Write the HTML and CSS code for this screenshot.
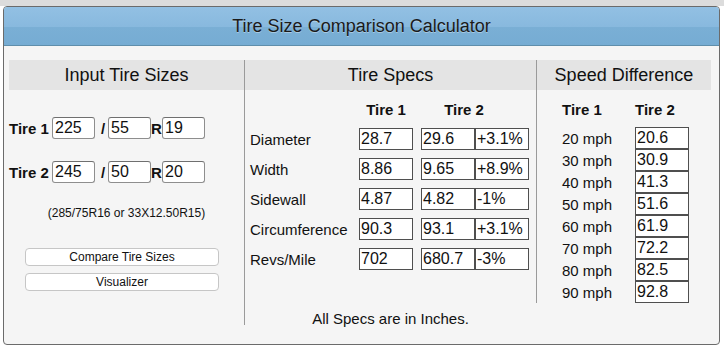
FILE: index.html
```html
<!DOCTYPE html>
<html>
<head>
<meta charset="utf-8">
<title>Tire Size Comparison Calculator</title>
<link rel="stylesheet" href="styles.css">
</head>
<body>
<div class="panel">
  <div class="title">Tire Size Comparison Calculator</div>
  <div class="cols">
    <div class="col col-input">
      <div class="band">Input Tire Sizes</div>
      <div class="size-row row-one">
        <span class="lbl">Tire 1</span>
        <span class="field">225</span>
        <span class="slash">/</span>
        <span class="field">55</span>
        <span class="rim">R</span>
        <span class="field">19</span>
      </div>
      <div class="size-row row-two">
        <span class="lbl">Tire 2</span>
        <span class="field">245</span>
        <span class="slash">/</span>
        <span class="field">50</span>
        <span class="rim">R</span>
        <span class="field">20</span>
      </div>
      <div class="note">(285/75R16 or 33X12.50R15)</div>
      <div class="btn btn-first">Compare Tire Sizes</div>
      <div class="btn btn-second">Visualizer</div>
    </div>
    <div class="col col-specs">
      <div class="band">Tire Specs</div>
      <div class="spec-head"><span class="sh-lbl"></span><span class="sh-one">Tire 1</span><span class="sh-two">Tire 2</span></div>
      <div class="spec-row"><span class="spec-lbl">Diameter</span><span class="box">28.7</span><span class="box box-two">29.6</span><span class="box">+3.1%</span></div>
      <div class="spec-row"><span class="spec-lbl">Width</span><span class="box">8.86</span><span class="box box-two">9.65</span><span class="box">+8.9%</span></div>
      <div class="spec-row"><span class="spec-lbl">Sidewall</span><span class="box">4.87</span><span class="box box-two">4.82</span><span class="box">-1%</span></div>
      <div class="spec-row"><span class="spec-lbl">Circumference</span><span class="box">90.3</span><span class="box box-two">93.1</span><span class="box">+3.1%</span></div>
      <div class="spec-row"><span class="spec-lbl">Revs/Mile</span><span class="box">702</span><span class="box box-two">680.7</span><span class="box">-3%</span></div>
      <div class="units">All Specs are in Inches.</div>
    </div>
    <div class="col col-speed">
      <div class="band">Speed Difference</div>
      <div class="speed-head"><span class="sp-one">Tire 1</span><span class="sp-two">Tire 2</span></div>
      <div class="speed-row"><span class="speed-lbl">20 mph</span><span class="box">20.6</span></div>
      <div class="speed-row"><span class="speed-lbl">30 mph</span><span class="box">30.9</span></div>
      <div class="speed-row"><span class="speed-lbl">40 mph</span><span class="box">41.3</span></div>
      <div class="speed-row"><span class="speed-lbl">50 mph</span><span class="box">51.6</span></div>
      <div class="speed-row"><span class="speed-lbl">60 mph</span><span class="box">61.9</span></div>
      <div class="speed-row"><span class="speed-lbl">70 mph</span><span class="box">72.2</span></div>
      <div class="speed-row"><span class="speed-lbl">80 mph</span><span class="box">82.5</span></div>
      <div class="speed-row"><span class="speed-lbl">90 mph</span><span class="box">92.8</span></div>
    </div>
  </div>
</div>
</body>
</html>
```

FILE: styles.css
```css
* { box-sizing: border-box; }

html, body {
  margin: 0;
  padding: 0;
}

body {
  background: linear-gradient(#dcdcdc 0, #dcdcdc 6px, #ffffff 6px);
  font-family: "Liberation Sans", Arial, Helvetica, sans-serif;
  color: #111;
  padding-top: 6px;
  padding-left: 3px;
  height: 355px;
}

.panel {
  width: 717px;
  height: 339px;
  border: 1px solid #6b6b6b;
  border-radius: 4px;
  background: #f5f5f5;
  overflow: hidden;
}

.title {
  height: 39px;
  line-height: 38px;
  border-bottom: 1px solid #5f8eab;
  background: linear-gradient(#92c0e3 0, #88b9de 52%, #7aafd5 52%, #76acd3 100%);
  text-align: center;
  font-size: 18px;
  color: #1a1a1a;
  text-shadow: 0 1px 0 rgba(255, 255, 255, 0.35);
}

.cols {
  display: flex;
  align-items: flex-start;
  padding: 14px 7px 0 5px;
}

.col { display: flex; flex-direction: column; }

.col-input { width: 235px; }
.col-specs { width: 292px; border-left: 1px solid #9a9a9a; margin-bottom: -4px; }
.col-speed { width: 175px; border-left: 1px solid #9a9a9a; }

.band {
  height: 30px;
  line-height: 30px;
  background: #e4e4e4;
  text-align: center;
  font-size: 18px;
}

/* input column */
.size-row {
  display: flex;
  align-items: center;
  height: 22px;
}
.row-one { margin-top: 27px; }
.row-two { margin-top: 22px; }

.lbl {
  width: 43px;
  font-weight: bold;
  font-size: 15px;
}

.field {
  width: 43px;
  height: 22px;
  line-height: 20px;
  border: 1px solid #8e8e8e;
  border-top-color: #6f6f6f;
  border-radius: 3px;
  background: #fff;
  font-size: 16px;
  padding-left: 2px;
}

.slash {
  width: 13px;
  padding-left: 3px;
  text-align: center;
  font-weight: bold;
  font-size: 15px;
}

.rim {
  width: 11px;
  font-weight: bold;
  font-size: 15px;
}

.note {
  margin-top: 23px;
  font-size: 12px;
  line-height: 14px;
  text-align: center;
}

.btn {
  margin-left: 16px;
  width: 194px;
  height: 18px;
  line-height: 16px;
  border: 1px solid #c6c6c6;
  border-radius: 4px;
  background: #fff;
  font-size: 12px;
  text-align: center;
}
.btn-first { margin-top: 28px; }
.btn-second { margin-top: 7px; }

/* specs column */
.spec-head, .speed-head {
  display: flex;
  padding-top: 10px;
  height: 30px;
  line-height: 20px;
  font-weight: bold;
  font-size: 15px;
}
.spec-head { margin-bottom: 8px; }
.sh-lbl { width: 114px; }
.sh-one { width: 54px; text-align: center; }
.sh-two { width: 86px; margin-left: 8px; text-align: center; }

.spec-row {
  display: flex;
  align-items: center;
  height: 22px;
  margin-bottom: 8px;
  padding-left: 5px;
}
.spec-lbl {
  width: 109px;
  font-size: 15px;
}

.box {
  width: 54px;
  height: 22px;
  line-height: 20px;
  border: 1px solid #4f4f4f;
  background: #fff;
  font-size: 16px;
  padding-left: 1px;
  white-space: nowrap;
}
.box-two { margin-left: 8px; }

.units {
  margin-top: 34px;
  line-height: 13px;
  font-size: 15px;
  text-align: center;
}

/* speed column */
.speed-head { margin-bottom: 7px; padding-left: 25px; }
.sp-one { width: 73px; }

.speed-row {
  display: flex;
  align-items: center;
  height: 22px;
  padding-left: 25px;
}
.speed-lbl {
  width: 73px;
  font-size: 15px;
}
```
